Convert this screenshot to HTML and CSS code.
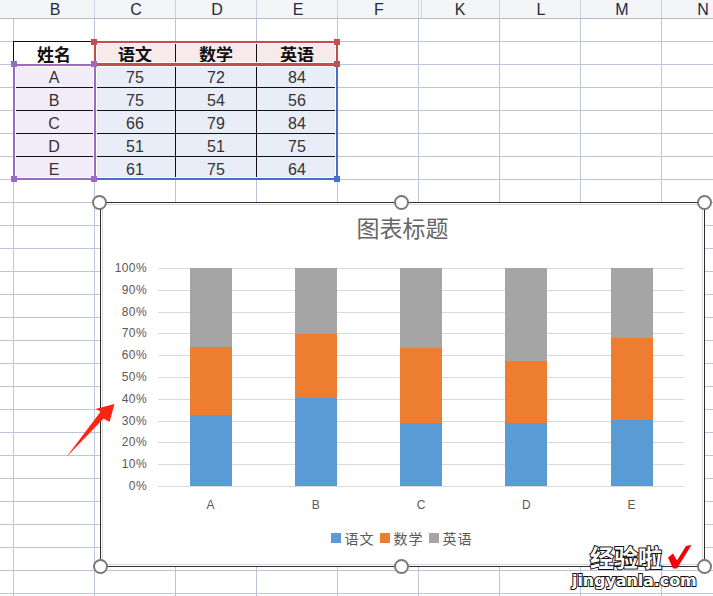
FILE: index.html
```html
<!DOCTYPE html>
<html lang="zh">
<head>
  <meta charset="UTF-8" />
  <title>图表标题</title>
  <link rel="stylesheet" href="styles.css">
</head>
<body>
  <div class="sheet">

    <!-- Column headers -->
    <div class="col-header">
      <div class="col-stub"></div>
      <div class="col-name">B</div>
      <div class="col-name">C</div>
      <div class="col-name">D</div>
      <div class="col-name">E</div>
      <div class="col-name">F</div>
      <div class="col-name col-after-hidden">K</div>
      <div class="col-name">L</div>
      <div class="col-name">M</div>
      <div class="col-name">N</div>
    </div>

    <!-- Data table -->
    <div class="data">
      <div class="cell cell-head">姓名</div>
      <div class="cell cell-head fill-red">语文</div>
      <div class="cell cell-head fill-red">数学</div>
      <div class="cell cell-head fill-red">英语</div>

      <div class="cell fill-purple">A</div>
      <div class="cell fill-blue">75</div>
      <div class="cell fill-blue">72</div>
      <div class="cell fill-blue">84</div>

      <div class="cell fill-purple">B</div>
      <div class="cell fill-blue">75</div>
      <div class="cell fill-blue">54</div>
      <div class="cell fill-blue">56</div>

      <div class="cell fill-purple">C</div>
      <div class="cell fill-blue">66</div>
      <div class="cell fill-blue">79</div>
      <div class="cell fill-blue">84</div>

      <div class="cell fill-purple">D</div>
      <div class="cell fill-blue">51</div>
      <div class="cell fill-blue">51</div>
      <div class="cell fill-blue">75</div>

      <div class="cell fill-purple">E</div>
      <div class="cell fill-blue">61</div>
      <div class="cell fill-blue">75</div>
      <div class="cell fill-blue">64</div>

      <!-- Range highlights -->
      <div class="range range-blue"></div>
      <div class="range range-red"></div>
      <div class="range range-purple"></div>
      <span class="grip grip-red grip-c1"></span>
      <span class="grip grip-red grip-e1"></span>
      <span class="grip grip-red grip-e2"></span>
      <span class="grip grip-blue grip-e7"></span>
      <span class="grip grip-purple grip-b2"></span>
      <span class="grip grip-purple grip-c2"></span>
      <span class="grip grip-purple grip-b7"></span>
      <span class="grip grip-purple grip-c7"></span>
    </div>

    <!-- Chart -->
    <div class="chart">
      <div class="chart-inner">
        <div class="chart-title">图表标题</div>
        <div class="chart-body">
          <div class="axis">
            <span>100%</span><span>90%</span><span>80%</span><span>70%</span><span>60%</span>
            <span>50%</span><span>40%</span><span>30%</span><span>20%</span><span>10%</span><span>0%</span>
          </div>
          <div class="plot">
            <div class="gridlines">
              <i></i><i></i><i></i><i></i><i></i><i></i><i></i><i></i><i></i><i></i><i></i>
            </div>
            <div class="bars">
              <div class="slot"><div class="stack">
                <div class="seg seg-grey" style="height:36.36%"></div>
                <div class="seg seg-orange" style="height:31.17%"></div>
                <div class="seg seg-blue" style="height:32.47%"></div>
              </div></div>
              <div class="slot"><div class="stack">
                <div class="seg seg-grey" style="height:30.27%"></div>
                <div class="seg seg-orange" style="height:29.19%"></div>
                <div class="seg seg-blue" style="height:40.54%"></div>
              </div></div>
              <div class="slot"><div class="stack">
                <div class="seg seg-grey" style="height:36.68%"></div>
                <div class="seg seg-orange" style="height:34.5%"></div>
                <div class="seg seg-blue" style="height:28.82%"></div>
              </div></div>
              <div class="slot"><div class="stack">
                <div class="seg seg-grey" style="height:42.6%"></div>
                <div class="seg seg-orange" style="height:28.59%"></div>
                <div class="seg seg-blue" style="height:28.81%"></div>
              </div></div>
              <div class="slot"><div class="stack">
                <div class="seg seg-grey" style="height:32%"></div>
                <div class="seg seg-orange" style="height:37.5%"></div>
                <div class="seg seg-blue" style="height:30.5%"></div>
              </div></div>
            </div>
          </div>
        </div>
        <div class="categories">
          <span>A</span><span>B</span><span>C</span><span>D</span><span>E</span>
        </div>
        <div class="legend">
          <span class="legend-item"><i class="seg-blue"></i>语文</span>
          <span class="legend-item"><i class="seg-orange"></i>数学</span>
          <span class="legend-item"><i class="seg-grey"></i>英语</span>
        </div>
      </div>
      <span class="knob knob-tl"></span>
      <span class="knob knob-tc"></span>
      <span class="knob knob-tr"></span>
      <span class="knob knob-bl"></span>
      <span class="knob knob-bc"></span>
      <span class="knob knob-br"></span>
    </div>

    <!-- Red arrow annotation -->
    <svg class="arrow" width="60" height="64" viewBox="60 400 60 64">
      <polygon points="114.5,404 95.5,409 100.7,411.5 66,457.5 103.5,418.5 109.5,422" fill="#ff2412" />
    </svg>

    <!-- Watermark -->
    <div class="watermark">
      <div class="mark-top">
        <span class="mark-cn">经验啦</span>
        <svg class="mark-check" width="25" height="24" viewBox="0 0 25 24">
          <path d="M1 12.5 L6 8.5 L10 15.5 L19 1 L24.5 0 L10 23.5 L6 23.5 Z" fill="#f5000f" />
        </svg>
      </div>
      <div class="mark-url">jingyanla.com</div>
    </div>
  </div>
</body>
</html>
```

FILE: styles.css
```css
html, body {
  margin: 0;
  height: 100%;
  overflow: hidden;
  background: #fff;
}

.sheet {
  position: relative;
  width: 713px;
  height: 596px;
  overflow: hidden;
  font-family: "Liberation Sans", "Noto Sans CJK SC", sans-serif;
  color: #222;
  background-color: #fff;
  background-image:
    linear-gradient(to right, #bcc4d9 1px, transparent 1px),
    linear-gradient(to bottom, #bcc4d9 1px, transparent 1px);
  background-size: 81px 23px;
  background-position: 13px 18px;
}

/* COLUMN HEADERS */
.col-header {
  display: flex;
  height: 18px;
  width: 760px;
  background: #f4f5f7;
  border-bottom: 1px solid #b5bccd;
}

.col-stub {
  width: 14px;
  flex: none;
}

.col-name {
  width: 81px;
  flex: none;
  box-sizing: border-box;
  padding-left: 2px;
  border-right: 1px solid #cfd3de;
  text-align: center;
  font-size: 16px;
  line-height: 19px;
  color: #1d2a44;
}

.col-after-hidden {
  background: linear-gradient(to right, transparent 2px, #cfd3de 2px, #cfd3de 3px, transparent 3px);
}

/* DATA TABLE */
.data {
  position: relative;
  display: grid;
  grid-template-columns: repeat(4, 81px);
  grid-auto-rows: 23px;
  width: 324px;
  margin: 22px 0 0 13px;
}

.cell {
  box-sizing: border-box;
  padding-top: 2px;
  border-top: 1px solid #111;
  border-left: 1px solid #111;
  text-align: center;
  font-size: 16px;
  line-height: 22px;
  color: #333;
}

.cell-head {
  padding-top: 0;
  font-family: "Noto Sans CJK SC", sans-serif;
  font-weight: bold;
  font-size: 17px;
  line-height: 24px;
  color: #111;
}

.fill-red { background: #f8eaea; }
.fill-blue { background: #e9edf8; }
.fill-purple { background: #f2ecf8; }

.range {
  position: absolute;
  box-sizing: border-box;
  border: 2px solid;
  box-shadow: inset 0 0 0 1px #fff;
}

.range-red {
  left: 81px; top: 0;
  width: 244px; height: 24px;
  border-color: #c0504d;
}

.range-blue {
  left: 81px; top: 23px;
  width: 244px; height: 116px;
  border-color: #4a6dc8;
}

.range-purple {
  left: 0; top: 23px;
  width: 83px; height: 116px;
  border-color: #9a6cc0;
}

.grip {
  position: absolute;
  width: 6px;
  height: 6px;
}

.grip-red { background: #c0504d; }
.grip-blue { background: #4a6dc8; }
.grip-purple { background: #9a6cc0; }

.grip-c1 { left: 78px; top: -2px; }
.grip-e1 { left: 321px; top: -2px; }
.grip-e2 { left: 321px; top: 20px; }
.grip-e7 { left: 321px; top: 135px; }
.grip-b2 { left: -2px; top: 20px; }
.grip-c2 { left: 78px; top: 20px; }
.grip-b7 { left: -2px; top: 135px; }
.grip-c7 { left: 78px; top: 135px; }

/* CHART */
.chart {
  position: absolute;
  left: 100px;
  top: 202px;
  width: 605px;
  height: 365px;
  box-sizing: border-box;
  border: 1px solid #2e2e2e;
  padding: 1px;
  background: #fff;
}

.chart-inner {
  height: 100%;
  box-sizing: border-box;
  border: 1px solid #d9d9d9;
  color: #595959;
}

.chart-title {
  padding-top: 7px;
  text-align: center;
  font-size: 23px;
  line-height: 30px;
  font-family: "Noto Sans CJK SC", sans-serif;
  color: #666;
}

.chart-body {
  display: flex;
  margin-top: 26px;
  height: 219px;
}

.axis {
  display: flex;
  flex-direction: column;
  justify-content: space-between;
  box-sizing: border-box;
  width: 44px;
  margin: -7px 11px -6px 0;
  text-align: right;
  font-size: 12px;
  line-height: 14px;
  letter-spacing: 0.4px;
}

.plot {
  display: grid;
  width: 526px;
}

.plot > div {
  grid-area: 1 / 1;
}

.gridlines {
  display: flex;
  flex-direction: column;
  justify-content: space-between;
}

.gridlines i {
  display: block;
  height: 1px;
  background: #d9d9d9;
}

.bars {
  display: flex;
  margin: 0 -0.2px 0 0.2px;
  padding-bottom: 1px;
}

.slot {
  flex: 1;
  display: flex;
  justify-content: center;
}

.stack {
  display: flex;
  flex-direction: column;
  width: 42px;
}

.seg-blue { background: #5b9bd5; }
.seg-orange { background: #ed7d31; }
.seg-grey { background: #a5a5a5; }

.categories {
  display: flex;
  width: 526px;
  margin: 10px 0 0 55px;
  font-size: 12px;
  line-height: 16px;
  text-align: center;
}

.categories span {
  flex: 1;
}

.legend {
  display: flex;
  justify-content: center;
  gap: 5px;
  margin-top: 17px;
  padding-right: 2px;
  font-family: "Noto Sans CJK SC", sans-serif;
  font-size: 14px;
  line-height: 16px;
  letter-spacing: 1px;
}

.legend-item {
  display: flex;
  align-items: center;
  gap: 4px;
}

.legend-item i {
  display: block;
  width: 10px;
  height: 10px;
}

/* Resize handles */
.knob {
  position: absolute;
  width: 15px;
  height: 15px;
  box-sizing: border-box;
  border: 2px solid #7a7a7a;
  border-radius: 50%;
  background: #fff;
}

.knob-tl { left: -9px; top: -8px; }
.knob-tc { left: 293px; top: -8px; }
.knob-tr { left: 596px; top: -8px; }
.knob-bl { left: -8px; bottom: -8px; }
.knob-bc { left: 293px; bottom: -8px; }
.knob-br { left: 596px; bottom: -8px; }

.arrow {
  position: absolute;
  left: 60px;
  top: 400px;
}

/* WATERMARK */
.watermark {
  position: absolute;
  left: 572px;
  top: 543px;
  width: 130px;
  font-weight: bold;
  color: #fff;
  -webkit-text-stroke: 2px #111;
  paint-order: stroke fill;
}

.mark-top {
  display: flex;
  align-items: center;
  gap: 5px;
  height: 28px;
  padding-left: 18px;
}

.mark-cn {
  font-family: "Noto Sans CJK SC", sans-serif;
  font-size: 24px;
  line-height: 28px;
  color: #fff;
}

.mark-check {
  flex: none;
  margin-top: -1px;
}

.mark-url {
  font-family: "DejaVu Sans", sans-serif;
  font-size: 16px;
  line-height: 20px;
  letter-spacing: -0.1px;
}
```
